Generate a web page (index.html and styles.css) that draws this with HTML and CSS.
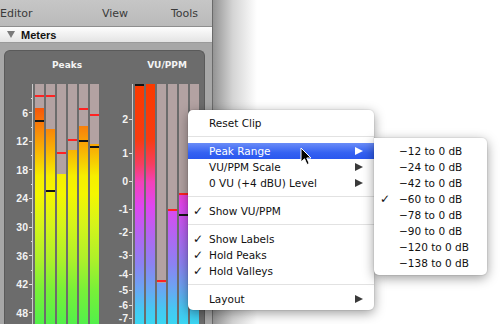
FILE: index.html
```html
<!DOCTYPE html>
<html lang="en">
<head>
    <meta charset="UTF-8">
    <title>Meters</title>
    <link rel="stylesheet" href="styles.css">
</head>
<body>
    <div class="screen">
        <div class="window">
            <div class="toolbar">
                <span class="tool tool-editor">Editor</span>
                <span class="tool tool-view">View</span>
                <span class="tool">Tools</span>
            </div>
            <div class="section-head">
                <span class="disclosure"></span>
                <span class="section-title">Meters</span>
            </div>
            <div class="well">
                <div class="panel">
                    <div class="group">
                        <div class="group-title">Peaks</div>
                        <div class="group-body">
                            <div class="scale">
                                <div class="mark" style="top: 23.6px">6</div>
                                <div class="mark" style="top: 52.2px">12</div>
                                <div class="mark" style="top: 80.8px">18</div>
                                <div class="mark" style="top: 109.4px">24</div>
                                <div class="mark" style="top: 138px">30</div>
                                <div class="mark" style="top: 166.6px">36</div>
                                <div class="mark" style="top: 195.2px">42</div>
                                <div class="mark" style="top: 223.8px">48</div>
                                <div class="minor" style="top: 14px"></div>
                                <div class="minor" style="top: 43px"></div>
                                <div class="minor" style="top: 71px"></div>
                                <div class="minor" style="top: 100px"></div>
                                <div class="minor" style="top: 128px"></div>
                                <div class="minor" style="top: 157px"></div>
                                <div class="minor" style="top: 186px"></div>
                                <div class="minor" style="top: 214px"></div>
                            </div>
                            <div class="bars">
                                <div class="bar bar-peak">
                                    <div class="empty" style="height: 24px"></div>
                                    <div class="hold hold-peak" style="top: 11px"></div>
                                    <div class="hold hold-valley" style="top: 36px"></div>
                                </div>
                                <div class="bar bar-peak">
                                    <div class="empty" style="height: 45px"></div>
                                    <div class="hold hold-peak" style="top: 11px"></div>
                                    <div class="hold hold-valley" style="top: 106px"></div>
                                </div>
                                <div class="bar bar-peak">
                                    <div class="empty" style="height: 90px"></div>
                                    <div class="hold hold-peak" style="top: 68px"></div>
                                </div>
                                <div class="bar bar-peak">
                                    <div class="empty" style="height: 66px"></div>
                                    <div class="hold hold-peak" style="top: 55px"></div>
                                </div>
                                <div class="bar bar-peak">
                                    <div class="empty" style="height: 42px"></div>
                                    <div class="hold hold-peak" style="top: 24px"></div>
                                    <div class="hold hold-valley" style="top: 56px"></div>
                                </div>
                                <div class="bar bar-peak">
                                    <div class="empty" style="height: 60px"></div>
                                    <div class="hold hold-peak" style="top: 30px"></div>
                                    <div class="hold hold-valley" style="top: 62px"></div>
                                </div>
                            </div>
                        </div>
                    </div>
                    <div class="group group-vu">
                        <div class="group-title">VU/PPM</div>
                        <div class="group-body">
                            <div class="scale">
                                <div class="mark" style="top: 30px">2</div>
                                <div class="mark" style="top: 64px">1</div>
                                <div class="mark" style="top: 92px">0</div>
                                <div class="mark" style="top: 120px">-1</div>
                                <div class="mark" style="top: 143px">-2</div>
                                <div class="mark" style="top: 166px">-3</div>
                                <div class="mark" style="top: 185px">-4</div>
                                <div class="mark" style="top: 201px">-5</div>
                                <div class="mark" style="top: 216px">-6</div>
                                <div class="mark" style="top: 229px">-7</div>
                            </div>
                            <div class="bars">
                                <div class="bar bar-vu">
                                    <div class="hold hold-valley" style="top: 0"></div>
                                </div>
                                <div class="bar bar-vu"></div>
                                <div class="bar bar-vu">
                                    <div class="empty" style="height: 199px"></div>
                                    <div class="hold hold-peak" style="top: 196px"></div>
                                </div>
                                <div class="bar bar-vu">
                                    <div class="empty" style="height: 126px"></div>
                                    <div class="hold hold-peak" style="top: 125px"></div>
                                </div>
                                <div class="bar bar-vu">
                                    <div class="empty" style="height: 110px"></div>
                                    <div class="hold hold-peak" style="top: 109px"></div>
                                    <div class="hold hold-valley" style="top: 130px"></div>
                                </div>
                                <div class="bar bar-vu">
                                    <div class="empty" style="height: 140px"></div>
                                    <div class="hold hold-peak" style="top: 139px"></div>
                                </div>
                            </div>
                        </div>
                    </div>
                </div>
            </div>
        </div>
        <div class="window-shadow"></div>
    </div>

    <div class="menu">
        <div class="item">Reset Clip</div>
        <div class="sep"></div>
        <div class="item active">Peak Range<span class="arrow"></span></div>
        <div class="item">VU/PPM Scale<span class="arrow"></span></div>
        <div class="item">0 VU (+4 dBU) Level<span class="arrow"></span></div>
        <div class="sep"></div>
        <div class="item"><span class="check">✓</span>Show VU/PPM</div>
        <div class="sep"></div>
        <div class="item"><span class="check">✓</span>Show Labels</div>
        <div class="item"><span class="check">✓</span>Hold Peaks</div>
        <div class="item"><span class="check">✓</span>Hold Valleys</div>
        <div class="sep"></div>
        <div class="item">Layout<span class="arrow"></span></div>
    </div>

    <div class="menu submenu">
        <div class="item">&minus;12 to 0 dB</div>
        <div class="item">&minus;24 to 0 dB</div>
        <div class="item">&minus;42 to 0 dB</div>
        <div class="item"><span class="check">✓</span>&minus;60 to 0 dB</div>
        <div class="item">&minus;78 to 0 dB</div>
        <div class="item">&minus;90 to 0 dB</div>
        <div class="item">&minus;120 to 0 dB</div>
        <div class="item">&minus;138 to 0 dB</div>
    </div>

    <svg class="cursor" width="12" height="19" viewBox="0 0 12 19">
        <path d="M1 1 L1 15 L4.5 11.8 L7 17.5 L9.2 16.5 L6.8 11 L11 11 Z" fill="#000" stroke="#fff" stroke-width="1" stroke-linejoin="round"/>
    </svg>
</body>
</html>
```

FILE: styles.css
```css
body {
    margin: 0;
    width: 502px;
    height: 324px;
    overflow: hidden;
    background: white;
    font-family: "DejaVu Sans", sans-serif;
    position: relative;
}
.screen {
    display: flex;
    height: 324px;
}
.window {
    width: 212px;
    display: flex;
    flex-direction: column;
    background: #a7a7a7;
    border-right: 1px solid #6a6a6a;
}
.window-shadow {
    width: 44px;
    background: linear-gradient(to right, #949494, #d4d4d4 45%, white);
}

.toolbar {
    height: 28px;
    display: flex;
    align-items: center;
    background: linear-gradient(#c6c6c6, #bababa);
    border-bottom: 1px solid #8e8e8e;
    font-size: 11px;
    color: #3a3a3a;
}
.tool-editor {
    width: 102px;
}
.tool-view {
    width: 69px;
}

.section-head {
    height: 16px;
    display: flex;
    align-items: center;
    background: linear-gradient(#fdfdfd, #e4e4e4);
    border-bottom: 1px solid #9a9a9a;
}
.disclosure {
    margin-left: 7px;
    width: 0;
    height: 0;
    border-left: 4px solid transparent;
    border-right: 4px solid transparent;
    border-top: 7px solid #7a7a7a;
}
.section-title {
    margin-left: 6px;
    font-family: "Liberation Sans", sans-serif;
    font-weight: bold;
    font-size: 11px;
    color: #111;
}

.well {
    flex: 1;
    padding: 7px 7px 0 4px;
}
.panel {
    height: 100%;
    display: flex;
    gap: 6px;
    padding-top: 9px;
    box-sizing: border-box;
    background: #6c6c6c;
    border: 1px solid #5a5a5a;
    border-bottom: none;
    border-radius: 6px 6px 0 0;
}
.group-title {
    margin-left: 30px;
    height: 11px;
    line-height: 11px;
    margin-bottom: 13px;
    text-align: center;
    font-size: 9px;
    font-weight: 600;
    color: #f4f4f4;
}
.group-body {
    display: flex;
    gap: 2px;
}
.scale {
    position: relative;
    width: 27px;
    height: 240px;
    border-right: 1px solid #c9c9c9;
}
.mark {
    position: absolute;
    right: 0;
    height: 10px;
    line-height: 10px;
    display: flex;
    align-items: center;
    gap: 1px;
    font-family: "Liberation Sans", sans-serif;
    font-size: 10.5px;
    font-weight: bold;
    color: #f2f2f2;
}
.mark::after {
    content: "";
    width: 3px;
    height: 1px;
    background: #e0e0e0;
}
.minor {
    position: absolute;
    right: 0;
    width: 1px;
    height: 1px;
    background: #e0e0e0;
}

.bars {
    display: flex;
    gap: 2px;
}
.bar {
    position: relative;
    width: 9px;
    height: 240px;
}
.bar-peak {
    background: linear-gradient(to bottom,
        #ff3000 0px, #f6560a 24px, #f8860a 45px, #f8b204 66px,
        #f6ee00 92px, #f4f600 110px, #d6f41a 140px, #aef02a 175px,
        #7af038 205px, #52f04a 240px);
}
.bar-vu {
    background: linear-gradient(to bottom,
        #fa3a00 0px, #f83c10 55px, #f63e60 80px, #f242b8 98px,
        #e046f0 122px, #b464f2 150px, #8c82f2 180px, #6aa6f2 205px,
        #46c8f2 225px, #3ad6f2 240px);
}
.empty {
    background: #b3a2a2;
}
.hold {
    position: absolute;
    left: 0;
    right: 0;
    height: 2px;
}
.hold-peak {
    background: #ff2222;
}
.hold-valley {
    background: #141414;
}

.menu {
    position: absolute;
    left: 188px;
    top: 110px;
    width: 186px;
    padding: 5px 0 3px;
    background: white;
    border-radius: 5px;
    box-shadow: 0 3px 12px rgba(0, 0, 0, 0.4), 0 0 0 1px rgba(0, 0, 0, 0.05);
    font-size: 10.5px;
    color: #111;
}
.submenu {
    left: 374px;
    top: 138px;
    width: 113px;
    padding: 5px 0 4px;
    border-radius: 0 5px 5px 5px;
}
.item {
    position: relative;
    height: 16px;
    line-height: 16px;
    padding-left: 21px;
}
.submenu .item {
    padding-left: 25px;
}
.item.active {
    background: linear-gradient(#6a8cf7, #3562f2 60%, #2a57ee);
    color: white;
}
.check {
    position: absolute;
    left: 5px;
    font-size: 12px;
    font-weight: bold;
}
.submenu .check {
    left: 6px;
}
.arrow {
    position: absolute;
    right: 11px;
    top: 4px;
    width: 0;
    height: 0;
    border-top: 4.5px solid transparent;
    border-bottom: 4.5px solid transparent;
    border-left: 8px solid #3a3a3a;
}
.item.active .arrow {
    border-left-color: white;
}
.sep {
    height: 12px;
    position: relative;
}
.sep::after {
    content: "";
    position: absolute;
    left: 0;
    right: 0;
    top: 5px;
    height: 1px;
    background: #e2e2e2;
}

.cursor {
    position: absolute;
    left: 300px;
    top: 147px;
}
```
